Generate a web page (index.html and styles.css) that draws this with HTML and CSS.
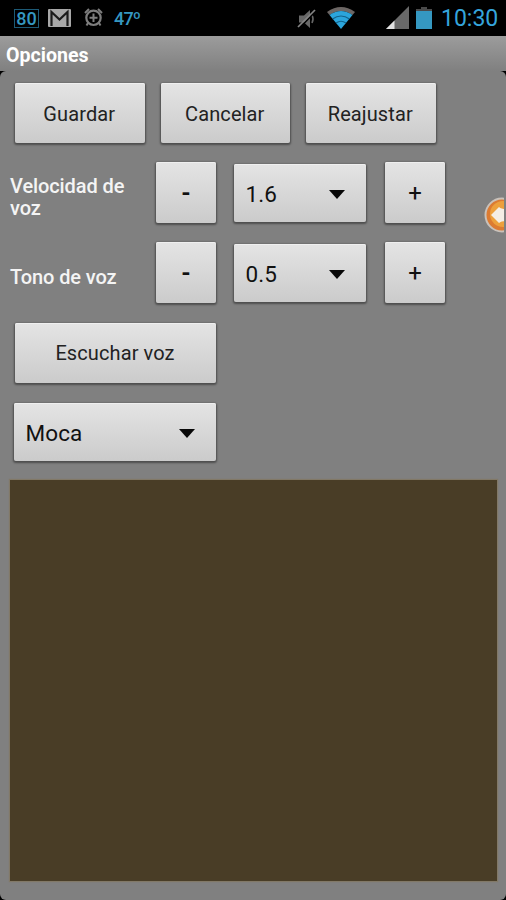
FILE: index.html
```html
<!DOCTYPE html>
<html lang="es">
<head>
<meta charset="UTF-8">
<meta name="viewport" content="width=device-width, initial-scale=1.0">
<title>Opciones</title>
<link rel="stylesheet" href="styles.css">
</head>
<body>
<div class="status-bar">
    <div class="status-left">
        <span class="battery-level">80</span>
        <svg class="mail-icon" width="23" height="18" viewBox="0 0 23 18">
            <rect width="23" height="18" rx="1" fill="#a8a8a8"/>
            <path d="M3.5 17V3L11.5 10.5L19.5 3V17" fill="none" stroke="#1c1c1c" stroke-width="2.2"/>
        </svg>
        <svg class="alarm-icon" width="19" height="19" viewBox="0 0 19 19" fill="none" stroke="#7d7d7d">
            <circle cx="9.5" cy="9.8" r="7.2" stroke-width="2.2"/>
            <path d="M1 5L5 1M14 1L18 5M4 15L2.5 17.5M15 15L16.5 17.5" stroke-width="2"/>
            <path d="M9.5 5.5V14M5.5 9.8H13.5" stroke-width="2"/>
        </svg>
        <span class="temperature">47º</span>
    </div>
    <div class="status-right">
        <svg class="mute-icon" width="20" height="20" viewBox="0 0 20 20">
            <path d="M2 6.5H7L13 1V19L7 13.5H2Z" fill="#686868"/>
            <path d="M15 6Q17 10 15 14" fill="none" stroke="#686868" stroke-width="1.6"/>
            <path d="M2.5 19L18.5 2.5" stroke="#000" stroke-width="1.6"/>
            <path d="M1 18L18 1" stroke="#858585" stroke-width="1.7"/>
        </svg>
        <svg class="wifi-icon" width="28" height="22" viewBox="0 0 28 22">
            <path d="M0 5Q14 -5 28 5L25.5 8Q14 0 2.5 8Z" fill="#6c6664"/>
            <path d="M2.5 8Q14 0 25.5 8L14 22Z" fill="#2ba5dc"/>
            <path d="M5.5 12Q14 6 22.5 12M9 16Q14 12.5 19 16" fill="none" stroke="#12628a" stroke-width="1.2"/>
        </svg>
        <svg class="signal-icon" width="23" height="23" viewBox="0 0 23 23">
            <path d="M23 0V23H0Z" fill="#696969"/>
            <path d="M8.5 14.5V23H0Z" fill="#e2e2e2"/>
        </svg>
        <svg class="battery-icon" width="16" height="22" viewBox="0 0 16 22">
            <path d="M5 0H11V2H16V5H0V2H5Z" fill="#4a4a4a"/>
            <rect y="4" width="16" height="18" fill="#3598c1"/>
        </svg>
        <span class="clock">10:30</span>
    </div>
</div>
<header>
    <h1>Opciones</h1>
</header>
<main>
    <div class="actions">
        <button type="button">Guardar</button>
        <button type="button">Cancelar</button>
        <button type="button">Reajustar</button>
    </div>
    <div class="setting">
        <span class="label">Velocidad de voz</span>
        <button type="button" class="step minus">-</button>
        <button type="button" class="select">1.6<span class="arrow"></span></button>
        <button type="button" class="step">+</button>
    </div>
    <div class="setting">
        <span class="label">Tono de voz</span>
        <button type="button" class="step minus">-</button>
        <button type="button" class="select">0.5<span class="arrow"></span></button>
        <button type="button" class="step">+</button>
    </div>
    <button type="button" class="listen">Escuchar voz</button>
    <button type="button" class="select color-select">Moca<span class="arrow"></span></button>
    <div class="color-preview"></div>
</main>
<!-- Floating handle that sticks out of the right edge -->
<svg class="side-handle" width="22" height="38" viewBox="0 0 22 38">
    <circle cx="18" cy="19" r="16.5" fill="#dc7b32" stroke="#c9c1ba" stroke-width="2"/>
    <circle cx="19" cy="18" r="13" fill="#eda03c"/>
    <path d="M7 19L15 11Q17 13 22 13V25Q17 25 15 27Z" fill="#f4eee5"/>
    <rect x="20" width="2" height="38" fill="#808080"/>
</svg>
</body>
</html>
```
FILE: styles.css
```css
html, body {
    margin: 0;
    padding: 0;
    width: 100%;
    height: 100%;
}
body {
    display: flex;
    flex-direction: column;
    position: relative;
    overflow: hidden;
    background-color: #000;
    font-family: Roboto, sans-serif;
}
.status-bar {
    display: flex;
    justify-content: space-between;
    height: 36px;
    flex-shrink: 0;
    color: #3598c1;
}
.status-left,
.status-right {
    display: flex;
    align-items: flex-start;
}
.status-left {
    padding-left: 14px;
}
.battery-level {
    box-sizing: border-box;
    width: 25px;
    height: 19px;
    margin-top: 9px;
    border: 1px solid #1d5a76;
    font-size: 18px;
    font-weight: 500;
    line-height: 18px;
    text-align: center;
}
.mail-icon {
    margin: 9px 0 0 9px;
}
.alarm-icon {
    margin: 8px 0 0 13px;
}
.temperature {
    margin: 8px 0 0 11px;
    font-size: 18px;
    font-weight: 500;
    line-height: 21px;
    letter-spacing: -0.8px;
}
.status-right {
    padding-right: 8px;
}
.mute-icon {
    margin: 9px 10px 0 0;
}
.wifi-icon {
    margin: 7px 31px 0 0;
}
.signal-icon {
    margin: 6px 7px 0 0;
}
.battery-icon {
    margin: 7px 9.5px 0 0;
}
.clock {
    width: 57px;
    margin-top: 6px;
    color: #35a5dc;
    font-size: 23px;
    line-height: 26px;
    white-space: nowrap;
}
header {
    height: 35px;
    flex-shrink: 0;
    background: linear-gradient(#9c9c9c, #808080);
}
h1 {
    margin: 0;
    padding: 8px 0 0 6px;
    color: #fff;
    font-size: 19.6px;
    font-weight: 700;
    line-height: 23px;
}
main {
    box-sizing: border-box;
    flex: 1;
    display: flex;
    flex-direction: column;
    align-items: flex-start;
    padding: 12px 9px 19px 10px;
    border-radius: 6px;
    background-color: #808080;
}
button {
    box-sizing: border-box;
    margin: 0;
    padding: 0;
    border: none;
    border-radius: 2px;
    background: linear-gradient(#e4e4e4, #cbcbcb);
    box-shadow: inset 0 1px 0 #efefef, 0 1px 2px 1px rgba(0, 0, 0, 0.4);
    color: #222;
    font-family: inherit;
    font-size: 20px;
    letter-spacing: 0.1px;
}
.actions {
    display: flex;
    gap: 16px;
    margin-left: 5px;
}
.actions button {
    width: 129.5px;
    height: 60px;
    padding: 1px 1px 0 0;
}
.setting {
    display: grid;
    grid-template-columns: 128px 60px 132px 61px;
    column-gap: 18px;
    align-items: center;
    height: 61px;
    margin-top: 19px;
}
.setting .step:last-child {
    margin-left: 1px;
}
.label {
    padding-top: 9px;
    color: #f4f4f4;
    font-size: 20px;
    font-weight: 500;
    line-height: 22px;
    letter-spacing: -0.1px;
}
.step {
    height: 61px;
    color: #111;
    font-size: 24px;
    letter-spacing: 0;
}
.minus {
    font-weight: 700;
}
.select {
    display: flex;
    align-items: center;
    justify-content: space-between;
    height: 58px;
    padding: 3px 21px 0 11.5px;
    color: #111;
    font-size: 22.5px;
}
.arrow {
    border: 8px solid transparent;
    border-top: 9px solid #080808;
    border-bottom: none;
}
.listen {
    width: 201px;
    height: 60px;
    margin: 20px 0 0 5px;
    padding-right: 1px;
}
.color-select {
    width: 202px;
    margin: 20px 0 0 4px;
    padding-top: 2px;
}
.color-preview {
    align-self: stretch;
    flex: 1;
    margin-top: 19px;
    background-color: #493d26;
    box-shadow: 0 0 1px 1px #827967;
}
.side-handle {
    position: absolute;
    top: 196px;
    right: 0;
}
```
